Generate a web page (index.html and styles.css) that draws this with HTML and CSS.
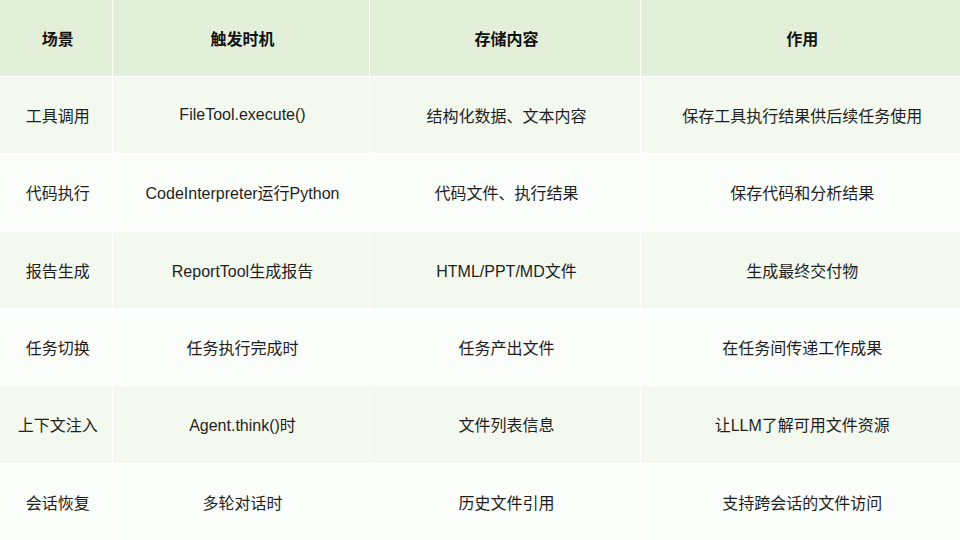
FILE: index.html
```html
<!DOCTYPE html>
<html lang="zh">
<head>
<meta charset="utf-8">
<link rel="stylesheet" href="styles.css">
</head>
<body>
<table class="grid">
  <colgroup>
    <col class="c1"><col class="c2"><col class="c3"><col class="c4">
  </colgroup>
  <thead>
    <tr class="head"><th>场景</th><th>触发时机</th><th>存储内容</th><th>作用</th></tr>
  </thead>
  <tbody>
    <tr class="odd"><td>工具调用</td><td>FileTool.execute()</td><td>结构化数据、文本内容</td><td>保存工具执行结果供后续任务使用</td></tr>
    <tr class="even"><td>代码执行</td><td>CodeInterpreter运行Python</td><td>代码文件、执行结果</td><td>保存代码和分析结果</td></tr>
    <tr class="odd"><td>报告生成</td><td>ReportTool生成报告</td><td>HTML/PPT/MD文件</td><td>生成最终交付物</td></tr>
    <tr class="even"><td>任务切换</td><td>任务执行完成时</td><td>任务产出文件</td><td>在任务间传递工作成果</td></tr>
    <tr class="odd"><td>上下文注入</td><td>Agent.think()时</td><td>文件列表信息</td><td>让LLM了解可用文件资源</td></tr>
    <tr class="even"><td>会话恢复</td><td>多轮对话时</td><td>历史文件引用</td><td>支持跨会话的文件访问</td></tr>
  </tbody>
</table>
</body>
</html>
```
FILE: styles.css
```css
html, body {
  margin: 0;
  padding: 0;
  background: #ffffff;
}
body {
  width: 960px;
  height: 540px;
  overflow: hidden;
  font-family: "Liberation Sans", "Noto Sans CJK SC", sans-serif;
  font-size: 16px;
  color: #1e1e1e;
}
.grid {
  width: 960px;
  height: 540px;
  table-layout: fixed;
  border-collapse: collapse;
}
.c1 { width: 112px; }
.c2 { width: 257px; }
.c3 { width: 271px; }
.c4 { width: 320px; }
.grid th, .grid td {
  text-align: center;
  vertical-align: middle;
  padding: 0 0 0 4px;
  height: 76px;
  border-right: 1px solid #ffffff;
  border-bottom: 1px solid #ffffff;
}
.grid th:last-child, .grid td:last-child { border-right: none; }
.grid tbody tr:last-child td { border-bottom: none; }
.head th {
  background: #e3f0d9;
  font-weight: bold;
  color: #111111;
}
.odd td { background: #f4f9f0; }
.even td { background: #fbfdfa; }
```
